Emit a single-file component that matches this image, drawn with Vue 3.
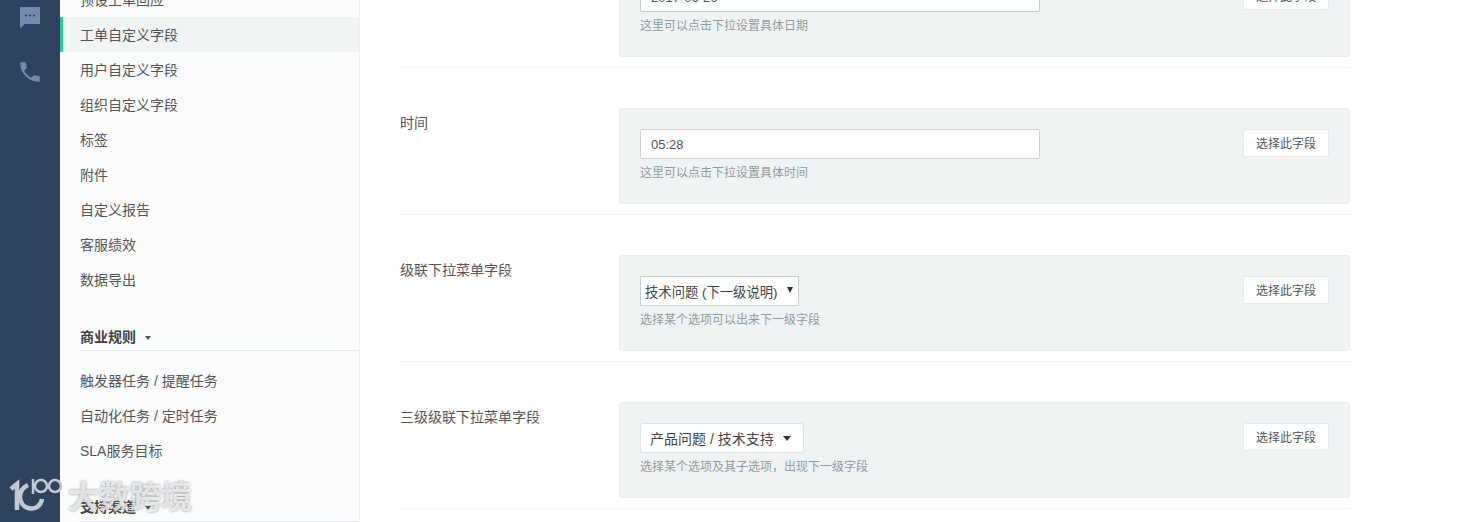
<script setup>
const topItems = ['预设工单回应', '工单自定义字段', '用户自定义字段', '组织自定义字段', '标签', '附件', '自定义报告', '客服绩效', '数据导出']
const ruleItems = ['触发器任务 / 提醒任务', '自动化任务 / 定时任务', 'SLA服务目标']
const rows = [
  { label: '日期', kind: 'input', value: '2017-06-26', hint: '这里可以点击下拉设置具体日期' },
  { label: '时间', kind: 'input', value: '05:28', hint: '这里可以点击下拉设置具体时间' },
  { label: '级联下拉菜单字段', kind: 'select', value: '技术问题 (下一级说明)', hint: '选择某个选项可以出来下一级字段' },
  { label: '三级级联下拉菜单字段', kind: 'combo', value: '产品问题 / 技术支持', hint: '选择某个选项及其子选项，出现下一级字段' }
]
</script>

<template>
  <div class="page">
    <aside class="rail">
      <svg class="rail-icon chat" viewBox="0 0 24 24"><path d="M2 2h20v17H6.500L2 23.500z" /><circle cx="8" cy="10.500" r="1.100" fill="#2f4260" /><circle cx="12" cy="10.500" r="1.100" fill="#2f4260" /><circle cx="16" cy="10.500" r="1.100" fill="#2f4260" /></svg>
      <svg class="rail-icon phone" viewBox="0 0 24 24"><path d="M6.600 10.800c1.400 2.800 3.800 5.100 6.600 6.600l2.200-2.200c.3-.3.700-.4 1-.2 1.100.4 2.300.6 3.600.6.600 0 1 .4 1 1V20c0 .6-.4 1-1 1C10.600 21 3 13.400 3 4c0-.6.400-1 1-1h3.500c.6 0 1 .4 1 1 0 1.300.2 2.500.6 3.600.1.300 0 .7-.2 1z" /></svg>
    </aside>

    <nav class="nav">
      <div class="nav-inner">
        <a v-for="item in topItems" :key="item" class="nav-item" :class="{ active: item === '工单自定义字段' }">{{ item }}</a>
        <h4 class="nav-head first">商业规则<i class="caret"></i></h4>
        <a v-for="item in ruleItems" :key="item" class="nav-item">{{ item }}</a>
        <h4 class="nav-head second">支持渠道<i class="caret"></i></h4>
      </div>
    </nav>

    <main class="main">
      <div class="main-inner">
        <section v-for="row in rows" :key="row.label" class="row">
          <div class="label">{{ row.label }}</div>
          <div class="card">
            <div class="field">
              <div v-if="row.kind === 'input'" class="input">{{ row.value }}</div>
              <div v-else-if="row.kind === 'select'" class="select">{{ row.value }}<i class="sel-arrow"></i></div>
              <div v-else class="combo">{{ row.value }}<i class="combo-arrow"></i></div>
              <p class="hint">{{ row.hint }}</p>
            </div>
            <button class="pick">选择此字段</button>
          </div>
        </section>
      </div>
    </main>

    <div class="watermark">
      <svg class="wm-logo" viewBox="0 0 66 50" fill="none" stroke="#c3c9d0">
        <path d="M11 17l6-5v26" stroke-width="4.500" />
        <path d="M28 13C17 18 18 33 28 36c7 2 13-2 14-9" stroke-width="4.500" />
        <path d="M33 7v15" stroke-width="2.500" />
        <circle cx="41" cy="14" r="6" stroke-width="2.500" />
        <circle cx="55" cy="14" r="6" stroke-width="2.500" />
      </svg>
      <span class="wm-text">大数跨境</span>
    </div>
  </div>
</template>

<style>
html, body { margin: 0; background: #fff; overflow: hidden; }
</style>

<style scoped>
.page {
  position: relative;
  display: flex;
  width: 1482px;
  height: 522px;
  overflow: hidden;
  background: #fff;
  color: #555;
  font-family: "Liberation Sans", "Noto Sans CJK SC", sans-serif;
  font-size: 14px;
}
.rail {
  flex: none;
  width: 60px;
  background: #2f4260;
  display: flex;
  flex-direction: column;
  align-items: center;
}
.rail-icon { fill: #7789ae; display: block; }
.chat { width: 24px; height: 24px; margin-top: 5px; }
.phone { width: 26px; height: 26px; margin-top: 30px; }
.nav {
  flex: none;
  width: 299px;
  background: #fbfcfd;
  border-right: 1px solid #eceff1;
  overflow: hidden;
}
.nav-inner { margin-top: -18px; }
.nav-item {
  display: block;
  height: 34px;
  padding-top: 1px;
  line-height: 35px;
  padding-left: 20px;
  color: #555;
}
.nav-item.active {
  background: #f1f4f4;
  box-shadow: inset 3px 0 0 #2ecc8b;
}
.nav-head {
  margin: 0 0 12px 20px;
  height: 26px;
  line-height: 26px;
  font-size: 14px;
  font-weight: 700;
  color: #444;
  border-bottom: 1px solid #e4e8ea;
}
.nav-head.first { margin-top: 27px; }
.nav-head.second { margin-top: 26px; margin-bottom: 0; height: 27px; }
.caret {
  display: inline-block;
  margin-left: 9px;
  vertical-align: middle;
  border: 3.500px solid transparent;
  border-top: 4px solid #555;
  border-bottom: 0;
}
.main { flex: 1; overflow: hidden; padding-left: 40px; }
.main-inner { width: 950px; margin-top: -79px; }
.row {
  display: flex;
  height: 146px;
  border-bottom: 1px solid #f1f3f4;
  align-items: flex-start;
}
.label {
  flex: none;
  width: 219px;
  margin-top: 45px;
  line-height: 20px;
  color: #555;
}
.card {
  flex: none;
  box-sizing: border-box;
  width: 731px;
  height: 96px;
  margin-top: 40px;
  padding: 20px 20px 0 20px;
  background: #eff3f4;
  border: 1px solid #e9ecee;
  border-radius: 3px;
  display: flex;
  justify-content: space-between;
  align-items: flex-start;
}
.input {
  box-sizing: border-box;
  width: 400px;
  height: 30px;
  line-height: 30px;
  padding-left: 10px;
  background: #fff;
  border: 1px solid #ccd0d2;
  border-radius: 2px;
  color: #555;
  font-size: 13px;
}
.select {
  box-sizing: border-box;
  display: flex;
  align-items: center;
  width: 159px;
  height: 30px;
  padding-left: 4px;
  background: #fff;
  border: 1px solid #ccd0d2;
  color: #444;
  font-size: 13.333px;
  white-space: nowrap;
}
.sel-arrow {
  margin: -3px 0 0 9px;
  border: 3.500px solid transparent;
  border-top: 6px solid #333;
  border-bottom: 0;
}
.combo {
  box-sizing: border-box;
  display: flex;
  align-items: center;
  width: 164px;
  height: 30px;
  padding-left: 9px;
  background: #fff;
  border: 1px solid #dde0e2;
  border-radius: 3px;
  color: #444;
  font-size: 14px;
  white-space: nowrap;
}
.combo-arrow {
  margin-left: 9px;
  border: 4.500px solid transparent;
  border-top: 5px solid #333;
  border-bottom: 0;
}
.hint {
  margin: 6px 0 0;
  font-size: 12px;
  line-height: 17px;
  color: #949a9e;
}
.pick {
  box-sizing: border-box;
  width: 86px;
  height: 28px;
  padding: 0 0 2px;
  background: #fff;
  border: 1px solid #e6e9eb;
  border-radius: 2px;
  color: #555;
  font: inherit;
  font-size: 12px;
}
.watermark {
  position: absolute;
  left: 0;
  top: 472px;
  display: flex;
  align-items: flex-start;
  height: 50px;
  pointer-events: none;
}
.wm-logo { width: 66px; height: 50px; display: block; flex: none; }
.wm-text {
  margin: 8px 0 0 2px;
  font-size: 31px;
  line-height: 36px;
  font-weight: 700;
  color: rgba(255, 255, 255, .72);
  text-shadow: 0 0 3px rgba(90, 95, 100, .7);
}
</style>
